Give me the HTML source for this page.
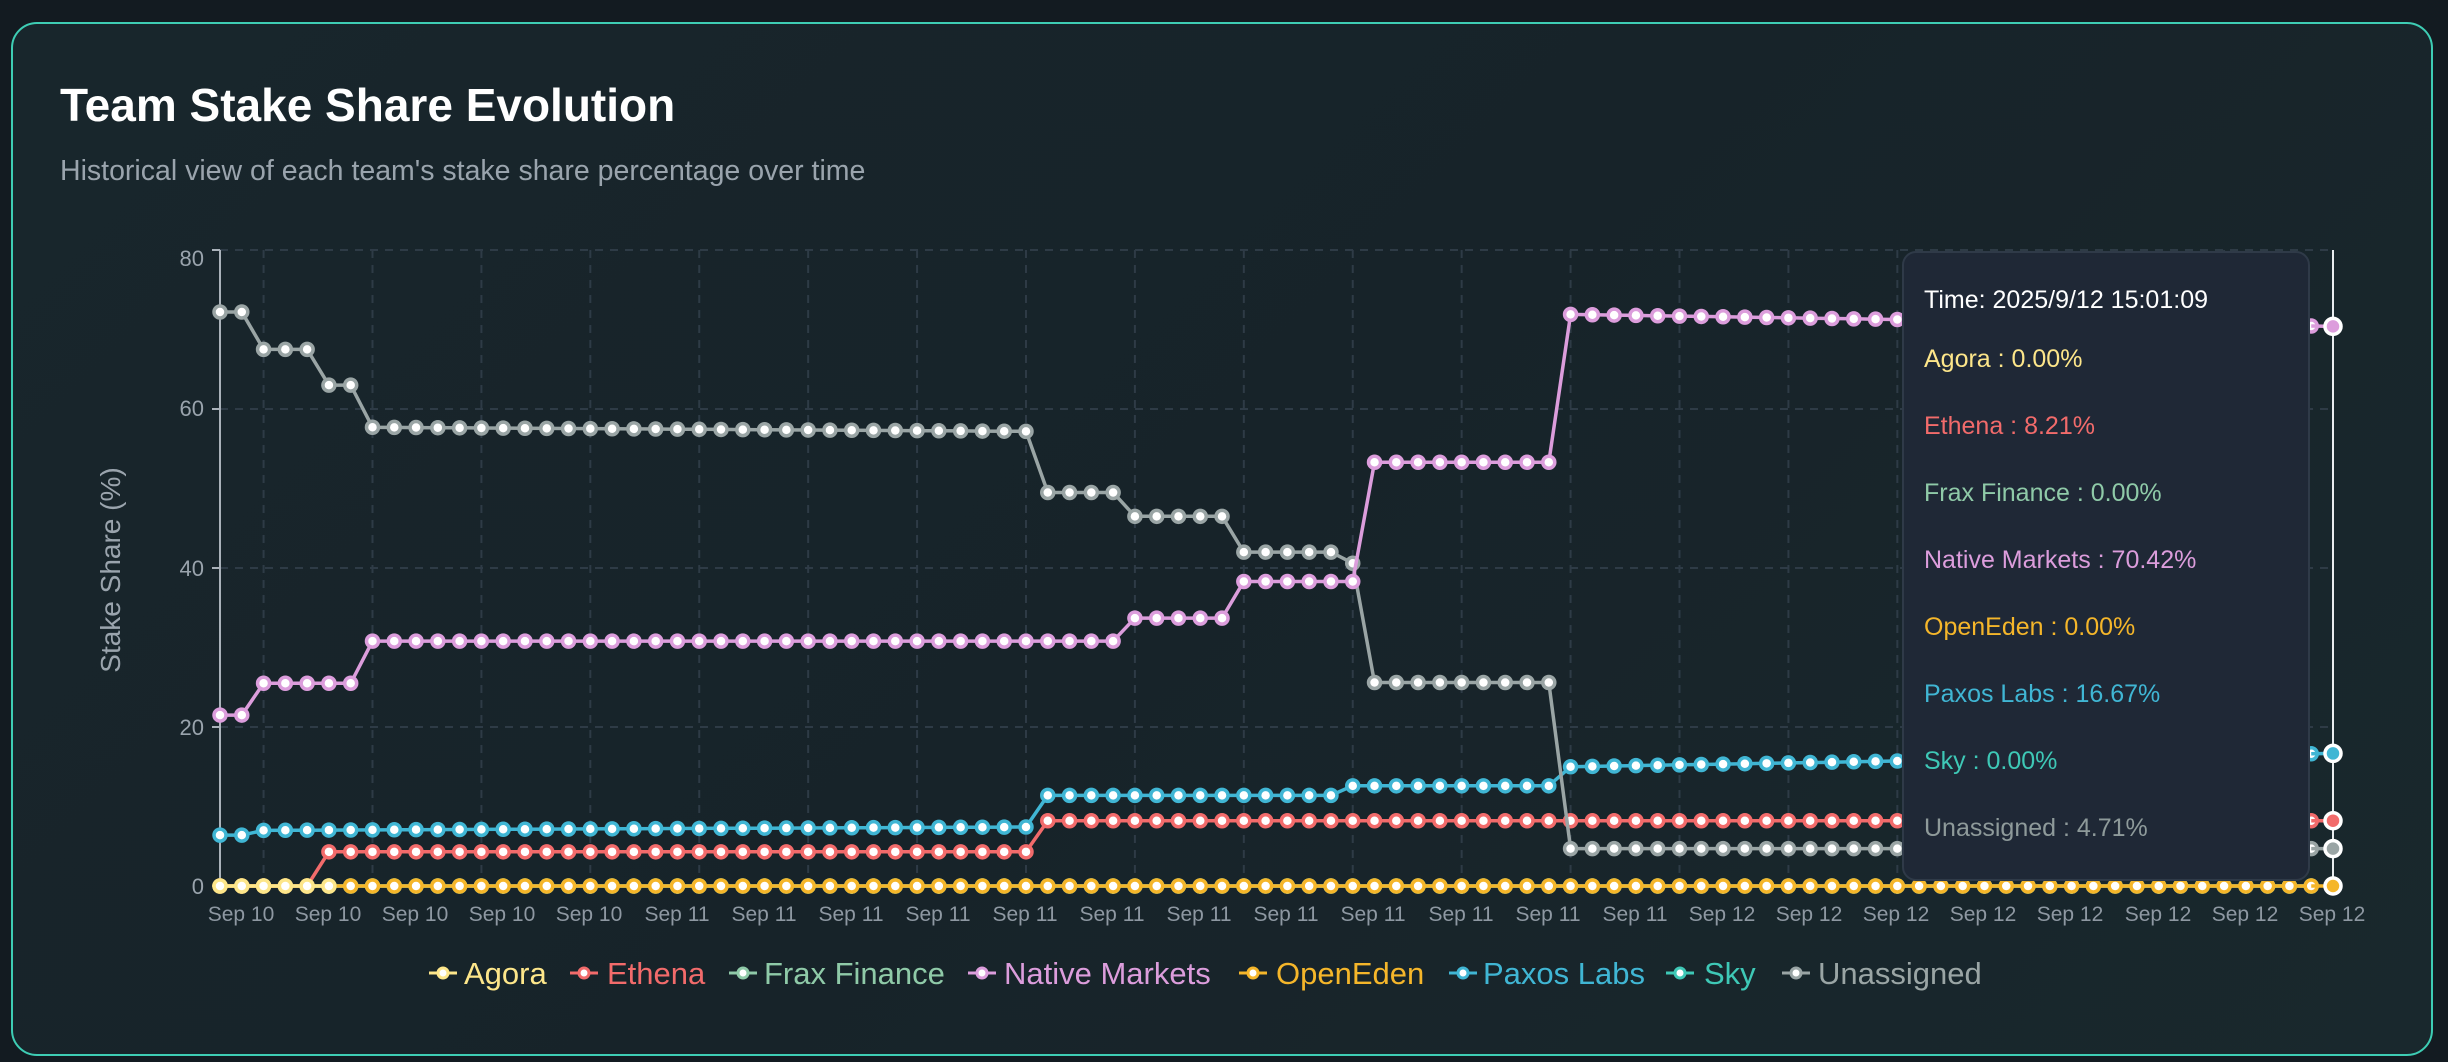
<!DOCTYPE html>
<html><head><meta charset="utf-8">
<style>
html,body{margin:0;padding:0;background:#131b21;width:2448px;height:1062px;overflow:hidden;font-family:"Liberation Sans",sans-serif;}
.card{position:absolute;left:11px;top:22px;width:2422px;height:1034px;border:2px solid #3ecdb4;border-radius:26px;background:linear-gradient(135deg,#18262c 0%,#172329 50%,#19282d 100%);box-sizing:border-box;}
h1{position:absolute;left:60px;top:78px;margin:0;font-size:46px;font-weight:bold;color:#fff;}
.sub{position:absolute;left:60px;top:155px;font-size:28.5px;color:#9aa4ad;}
svg{position:absolute;left:0;top:0;}
.tip{position:absolute;left:1902px;top:251px;width:408px;height:630px;background:#1f2836;border:2px solid #2f3a48;border-radius:14px;box-sizing:border-box;}
.tip div{position:absolute;left:20px;font-size:25px;white-space:nowrap;line-height:34px;}
</style></head><body>
<div class="card"></div>
<h1>Team Stake Share Evolution</h1>
<div class="sub">Historical view of each team's stake share percentage over time</div>
<svg id="s" width="2448" height="1062" xmlns="http://www.w3.org/2000/svg">
<g id="grid" stroke="#2e3b46" stroke-width="2" stroke-dasharray="8,7" fill="none"></g>
<g fill="#9aa4ad" font-size="22" text-anchor="end" font-family="Liberation Sans, sans-serif">
<text x="204" y="266">80</text><text x="204" y="416">60</text><text x="204" y="576">40</text><text x="204" y="735">20</text><text x="204" y="894">0</text>
</g>
<text x="120" y="570" fill="#9aa4ad" font-size="28" text-anchor="middle" transform="rotate(-90 120 570)" font-family="Liberation Sans, sans-serif">Stake Share (%)</text>
<g id="xl" fill="#8e98a2" font-size="21" text-anchor="middle" font-family="Liberation Sans, sans-serif">
<text x="241" y="921">Sep 10</text><text x="328" y="921">Sep 10</text><text x="415" y="921">Sep 10</text><text x="502" y="921">Sep 10</text><text x="589" y="921">Sep 10</text>
<text x="677" y="921">Sep 11</text><text x="764" y="921">Sep 11</text><text x="851" y="921">Sep 11</text><text x="938" y="921">Sep 11</text><text x="1025" y="921">Sep 11</text><text x="1112" y="921">Sep 11</text><text x="1199" y="921">Sep 11</text><text x="1286" y="921">Sep 11</text><text x="1373" y="921">Sep 11</text><text x="1461" y="921">Sep 11</text><text x="1548" y="921">Sep 11</text><text x="1635" y="921">Sep 11</text>
<text x="1722" y="921">Sep 12</text><text x="1809" y="921">Sep 12</text><text x="1896" y="921">Sep 12</text><text x="1983" y="921">Sep 12</text><text x="2070" y="921">Sep 12</text><text x="2158" y="921">Sep 12</text><text x="2245" y="921">Sep 12</text><text x="2332" y="921">Sep 12</text>
</g>
<g id="axes"></g>
<g id="series"></g>
<line x1="2333" y1="250" x2="2333" y2="886" stroke="#e8ecef" stroke-width="2"/>
<g id="hl"></g>
<g font-size="31" font-family="Liberation Sans, sans-serif">
<text x="464" y="984" fill="#fde68a">Agora</text>
<text x="607" y="984" fill="#f26b6b">Ethena</text>
<text x="764" y="984" fill="#8fcaa8">Frax Finance</text>
<text x="1004" y="984" fill="#dc9ddc">Native Markets</text>
<text x="1276" y="984" fill="#f5b62a">OpenEden</text>
<text x="1483" y="984" fill="#40b6d4">Paxos Labs</text>
<text x="1704" y="984" fill="#3ec8b6">Sky</text>
<text x="1818" y="984" fill="#9aa5a5">Unassigned</text>
</g>
<g id="lg"></g>
</svg>
<div class="tip">
<div style="top:30px;color:#ffffff">Time: 2025/9/12 15:01:09</div>
<div style="top:89px;color:#fde68a">Agora : 0.00%</div>
<div style="top:156px;color:#f26b6b">Ethena : 8.21%</div>
<div style="top:223px;color:#8fcaa8">Frax Finance : 0.00%</div>
<div style="top:290px;color:#dc9ddc">Native Markets : 70.42%</div>
<div style="top:357px;color:#f5b62a">OpenEden : 0.00%</div>
<div style="top:424px;color:#40b6d4">Paxos Labs : 16.67%</div>
<div style="top:491px;color:#3ec8b6">Sky : 0.00%</div>
<div style="top:558px;color:#8e9a9a">Unassigned : 4.71%</div>
</div>
<script>
var N=98,X0=220,X1=2333,step=(X1-X0)/97;
function X(i){return X0+i*step}
function Y(v){return 886-v*7.95}
var NS="http://www.w3.org/2000/svg";
function el(p,t,a){var e=document.createElementNS(NS,t);for(var k in a)e.setAttribute(k,a[k]);p.appendChild(e);return e}
var grid=document.getElementById('grid');
[20,40,60,80].forEach(function(v){el(grid,'line',{x1:X0,x2:X1,y1:Y(v),y2:Y(v)})});
for(var i=2;i<N;i+=5){el(grid,'line',{x1:X(i),x2:X(i),y1:250,y2:886})}
var ax=document.getElementById('axes');
el(ax,'line',{x1:X0,x2:X0,y1:250,y2:886,stroke:'#aab2ba','stroke-width':2});
[0,20,40,60,80].forEach(function(v){el(ax,'line',{x1:X0-8,x2:X0,y1:Y(v),y2:Y(v),stroke:'#aab2ba','stroke-width':2})});
el(ax,'line',{x1:X0,x2:X1,y1:886,y2:886,stroke:'#aab2ba','stroke-width':2});
for(var i=1;i<N;i+=4){el(ax,'line',{x1:X(i),x2:X(i),y1:886,y2:894,stroke:'#aab2ba','stroke-width':2})}
function arr(f){var a=[];for(var i=0;i<N;i++)a.push(f(i));return a}
var un=arr(function(i){if(i<2)return 72.2;if(i<5)return 67.5;if(i<7)return 63;if(i<38)return 57.7-(i-7)*0.017;if(i<42)return 49.5;if(i<47)return 46.5;if(i<52)return 42;if(i<53)return 40.6;if(i<62)return 25.6;return 4.7});
var na=arr(function(i){if(i<2)return 21.5;if(i<7)return 25.5;if(i<42)return 30.8;if(i<47)return 33.7;if(i<53)return 38.3;if(i<62)return 53.3;return 71.9-(i-62)*0.043});
var px=arr(function(i){if(i<2)return 6.4;if(i<38)return 7.0+(i-2)*0.012;if(i<52)return 11.4;if(i<62)return 12.6;return 15.0+(i-62)*0.048});
var et=arr(function(i){if(i<5)return 0;if(i<38)return 4.3;return 8.21});
var z=arr(function(){return 0});
var S=document.getElementById('series');
function draw(d,c,from,to){
 var p='';for(var i=from;i<=to;i++)p+=(i==from?'M':'L')+X(i).toFixed(1)+' '+Y(d[i]).toFixed(1);
 el(S,'path',{d:p,fill:'none',stroke:c,'stroke-width':3.5});
 for(var i=from;i<=to;i++)el(S,'circle',{cx:X(i),cy:Y(d[i]),r:6,fill:'#fff',stroke:c,'stroke-width':3.5});
}
draw(z,'#3ec8b6',0,96);
draw(z,'#8fcaa8',0,96);
draw(et,'#f26b6b',0,96);
draw(px,'#40b6d4',0,96);
draw(un,'#9aa5a5',0,96);
draw(na,'#dc9ddc',0,96);
draw(z,'#f5b62a',0,96);
draw(z,'#fde68a',0,5);
var H=document.getElementById('hl');
[[na,'#dc9ddc'],[px,'#40b6d4'],[et,'#f26b6b'],[un,'#9aa5a5'],[z,'#f5b62a']].forEach(function(s){
 var d=s[0];el(H,'line',{x1:X(96),y1:Y(d[96]),x2:X(97),y2:Y(d[97]),stroke:s[1],'stroke-width':3.5});
 el(H,'circle',{cx:X(97),cy:Y(d[97]),r:8,fill:s[1],stroke:'#fff','stroke-width':3.5});
});
var lg=document.getElementById('lg');
[[429,'#fde68a'],[570,'#f26b6b'],[729,'#8fcaa8'],[968,'#dc9ddc'],[1239,'#f5b62a'],[1449,'#40b6d4'],[1666,'#3ec8b6'],[1782,'#9aa5a5']].forEach(function(a){
 el(lg,'line',{x1:a[0],x2:a[0]+28,y1:973,y2:973,stroke:a[1],'stroke-width':3});
 el(lg,'circle',{cx:a[0]+14,cy:973,r:5,fill:'#fff',stroke:a[1],'stroke-width':3});
});
</script>
</body></html>
